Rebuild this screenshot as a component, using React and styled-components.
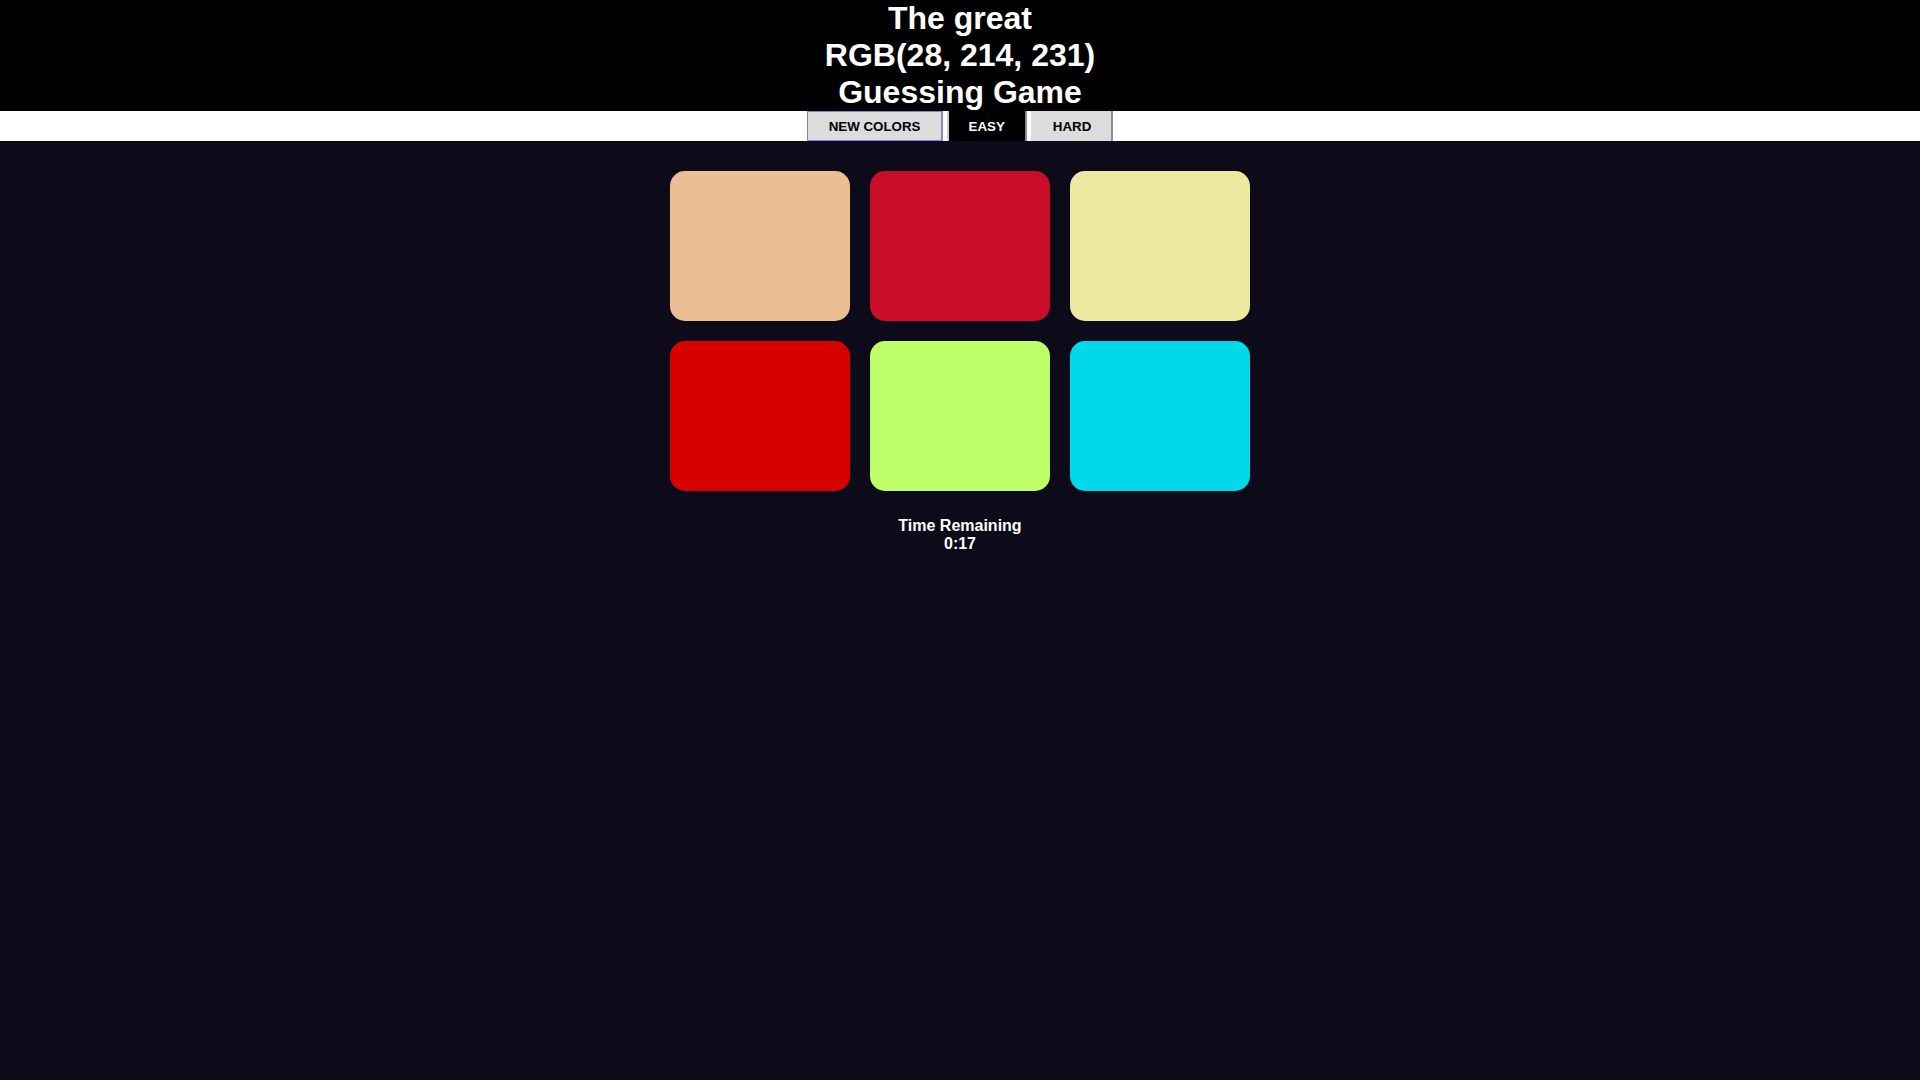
import { useState } from "react";
import styled, { createGlobalStyle } from "styled-components";

const GlobalStyle = createGlobalStyle`
  html, body {
    margin: 0;
    padding: 0;
    background: #0d0b1a;
    font-family: "Liberation Sans", Arial, sans-serif;
  }
`;

const Page = styled.div`
  min-height: 1080px;
  background: #0d0b1a;
  color: #fff;
`;

const Header = styled.header`
  background: #000;
  text-align: center;
`;

const Title = styled.h1`
  margin: 0;
  font-size: 32px;
  font-weight: bold;
  line-height: 37px;
  color: #fff;
`;

const Toolbar = styled.nav`
  display: flex;
  justify-content: center;
  gap: 4px;
  height: 30px;
  background: #fff;
`;

const ToolButton = styled.button`
  height: 30px;
  padding: 0 20px;
  border: none;
  border-left: 2px solid ${({ $selected }) => ($selected ? "#cfcfcf" : "#dcdcdc")};
  border-right: 2px solid #8f8f8f;
  background: ${({ $selected }) => ($selected ? "#000" : "#dcdcdc")};
  color: ${({ $selected }) => ($selected ? "#fff" : "#000")};
  font-family: "Liberation Sans", Arial, sans-serif;
  font-size: 13.333px;
  font-weight: bold;
  text-transform: uppercase;
  cursor: pointer;
  outline: ${({ $focused }) => ($focused ? "1px solid #8080e0" : "none")};
  outline-offset: -1px;
`;

const Board = styled.main`
  display: grid;
  grid-template-columns: repeat(3, 180px);
  gap: 20px;
  justify-content: center;
  padding-top: 30px;
`;

const Square = styled.div`
  height: 150px;
  border-radius: 15px;
  cursor: pointer;
`;

const Timer = styled.div`
  margin-top: 26px;
  text-align: center;
  font-size: 16px;
  font-weight: bold;
  line-height: 18px;
  color: #fff;
`;

const colors = [
  "#ebbe94",
  "#c90d29",
  "#eee9a1",
  "#d70000",
  "#bcff68",
  "#00d9e9",
];

export default function App() {
  const [mode, setMode] = useState("easy");

  return (
    <Page>
      <GlobalStyle />
      <Header>
        <Title>
          The great
          <br />
          RGB(28, 214, 231)
          <br />
          Guessing Game
        </Title>
      </Header>
      <Toolbar>
        <ToolButton $focused>New Colors</ToolButton>
        <ToolButton $selected={mode === "easy"} onClick={() => setMode("easy")}>
          Easy
        </ToolButton>
        <ToolButton $selected={mode === "hard"} onClick={() => setMode("hard")}>
          Hard
        </ToolButton>
      </Toolbar>
      <Board>
        {colors.map((color, index) => (
          <Square key={`square-${index}`} style={{ background: color }} />
        ))}
      </Board>
      <Timer>
        Time Remaining
        <br />
        0:17
      </Timer>
    </Page>
  );
}
